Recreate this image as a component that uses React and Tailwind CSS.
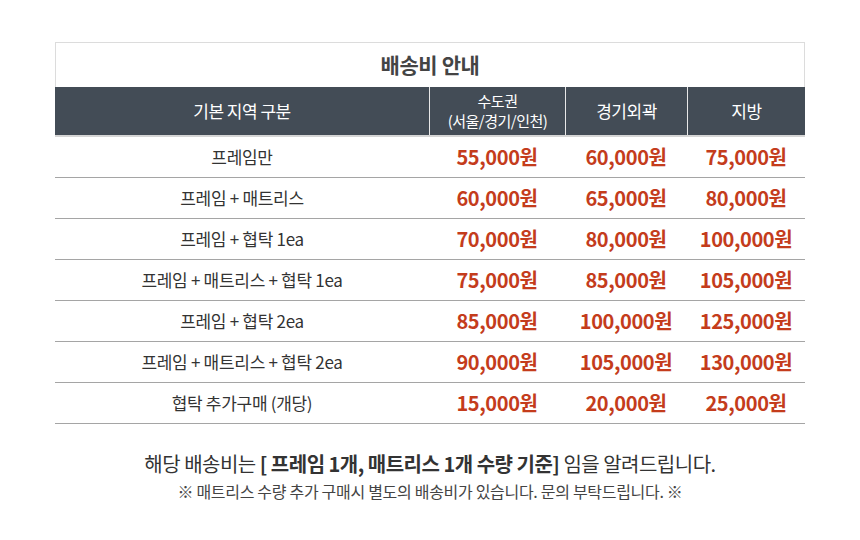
import React from 'react'

const rows = [
  ['프레임만', '55,000원', '60,000원', '75,000원'],
  ['프레임 + 매트리스', '60,000원', '65,000원', '80,000원'],
  ['프레임 + 협탁 1ea', '70,000원', '80,000원', '100,000원'],
  ['프레임 + 매트리스 + 협탁 1ea', '75,000원', '85,000원', '105,000원'],
  ['프레임 + 협탁 2ea', '85,000원', '100,000원', '125,000원'],
  ['프레임 + 매트리스 + 협탁 2ea', '90,000원', '105,000원', '130,000원'],
  ['협탁 추가구매 (개당)', '15,000원', '20,000원', '25,000원'],
]

export default function App() {
  return (
    <div
      className="w-[860px] h-[540px] bg-white pt-[42px]"
      style={{ fontFamily: '"Noto Sans CJK KR", "Noto Sans", sans-serif' }}
    >
      <div className="w-[750px] mx-auto">
        <div className="h-[45px] border border-[#dcdcdc] border-b-0 flex items-center justify-center text-[21px] font-bold text-[#444] tracking-[-0.4px]">
          배송비 안내
        </div>

        <div className="grid grid-cols-[374px_136px_122px_118px] h-[50px] bg-[#434c56] text-white border-b-2 border-[#d5d5d5] tracking-[-0.5px]">
          <div className="flex items-center justify-center text-[17px]">기본 지역 구분</div>
          <div className="flex flex-col items-center justify-center border-l border-[#e8e8e8] text-[15px] leading-[20px]">
            <span>수도권</span>
            <span>(서울/경기/인천)</span>
          </div>
          <div className="flex items-center justify-center border-l border-[#e8e8e8] text-[17px]">경기외곽</div>
          <div className="flex items-center justify-center border-l border-[#e8e8e8] text-[17px]">지방</div>
        </div>

        {rows.map((r) => (
          <div
            key={r[0]}
            className="grid grid-cols-[374px_136px_122px_118px] h-[41px] border-b border-[#a5a5a5] items-center"
          >
            <div className="text-center text-[17px] text-[#333] tracking-[-0.3px]">{r[0]}</div>
            {r.slice(1).map((p, i) => (
              <div key={i} className="text-center text-[20px] font-bold text-[#c43c1c] tracking-[-0.4px]">
                {p}
              </div>
            ))}
          </div>
        ))}

        <div className="mt-[27px] text-center text-[20px] text-[#333] tracking-[-0.5px] leading-[26px]">
          해당 배송비는 <span className="font-bold">[ 프레임 1개, 매트리스 1개 수량 기준]</span> 임을 알려드립니다.
        </div>
        <div className="mt-[3px] text-center text-[16px] text-[#444] tracking-[-0.3px] leading-[22px]">
          ※ 매트리스 수량 추가 구매시 별도의 배송비가 있습니다. 문의 부탁드립니다. ※
        </div>
      </div>
    </div>
  )
}
